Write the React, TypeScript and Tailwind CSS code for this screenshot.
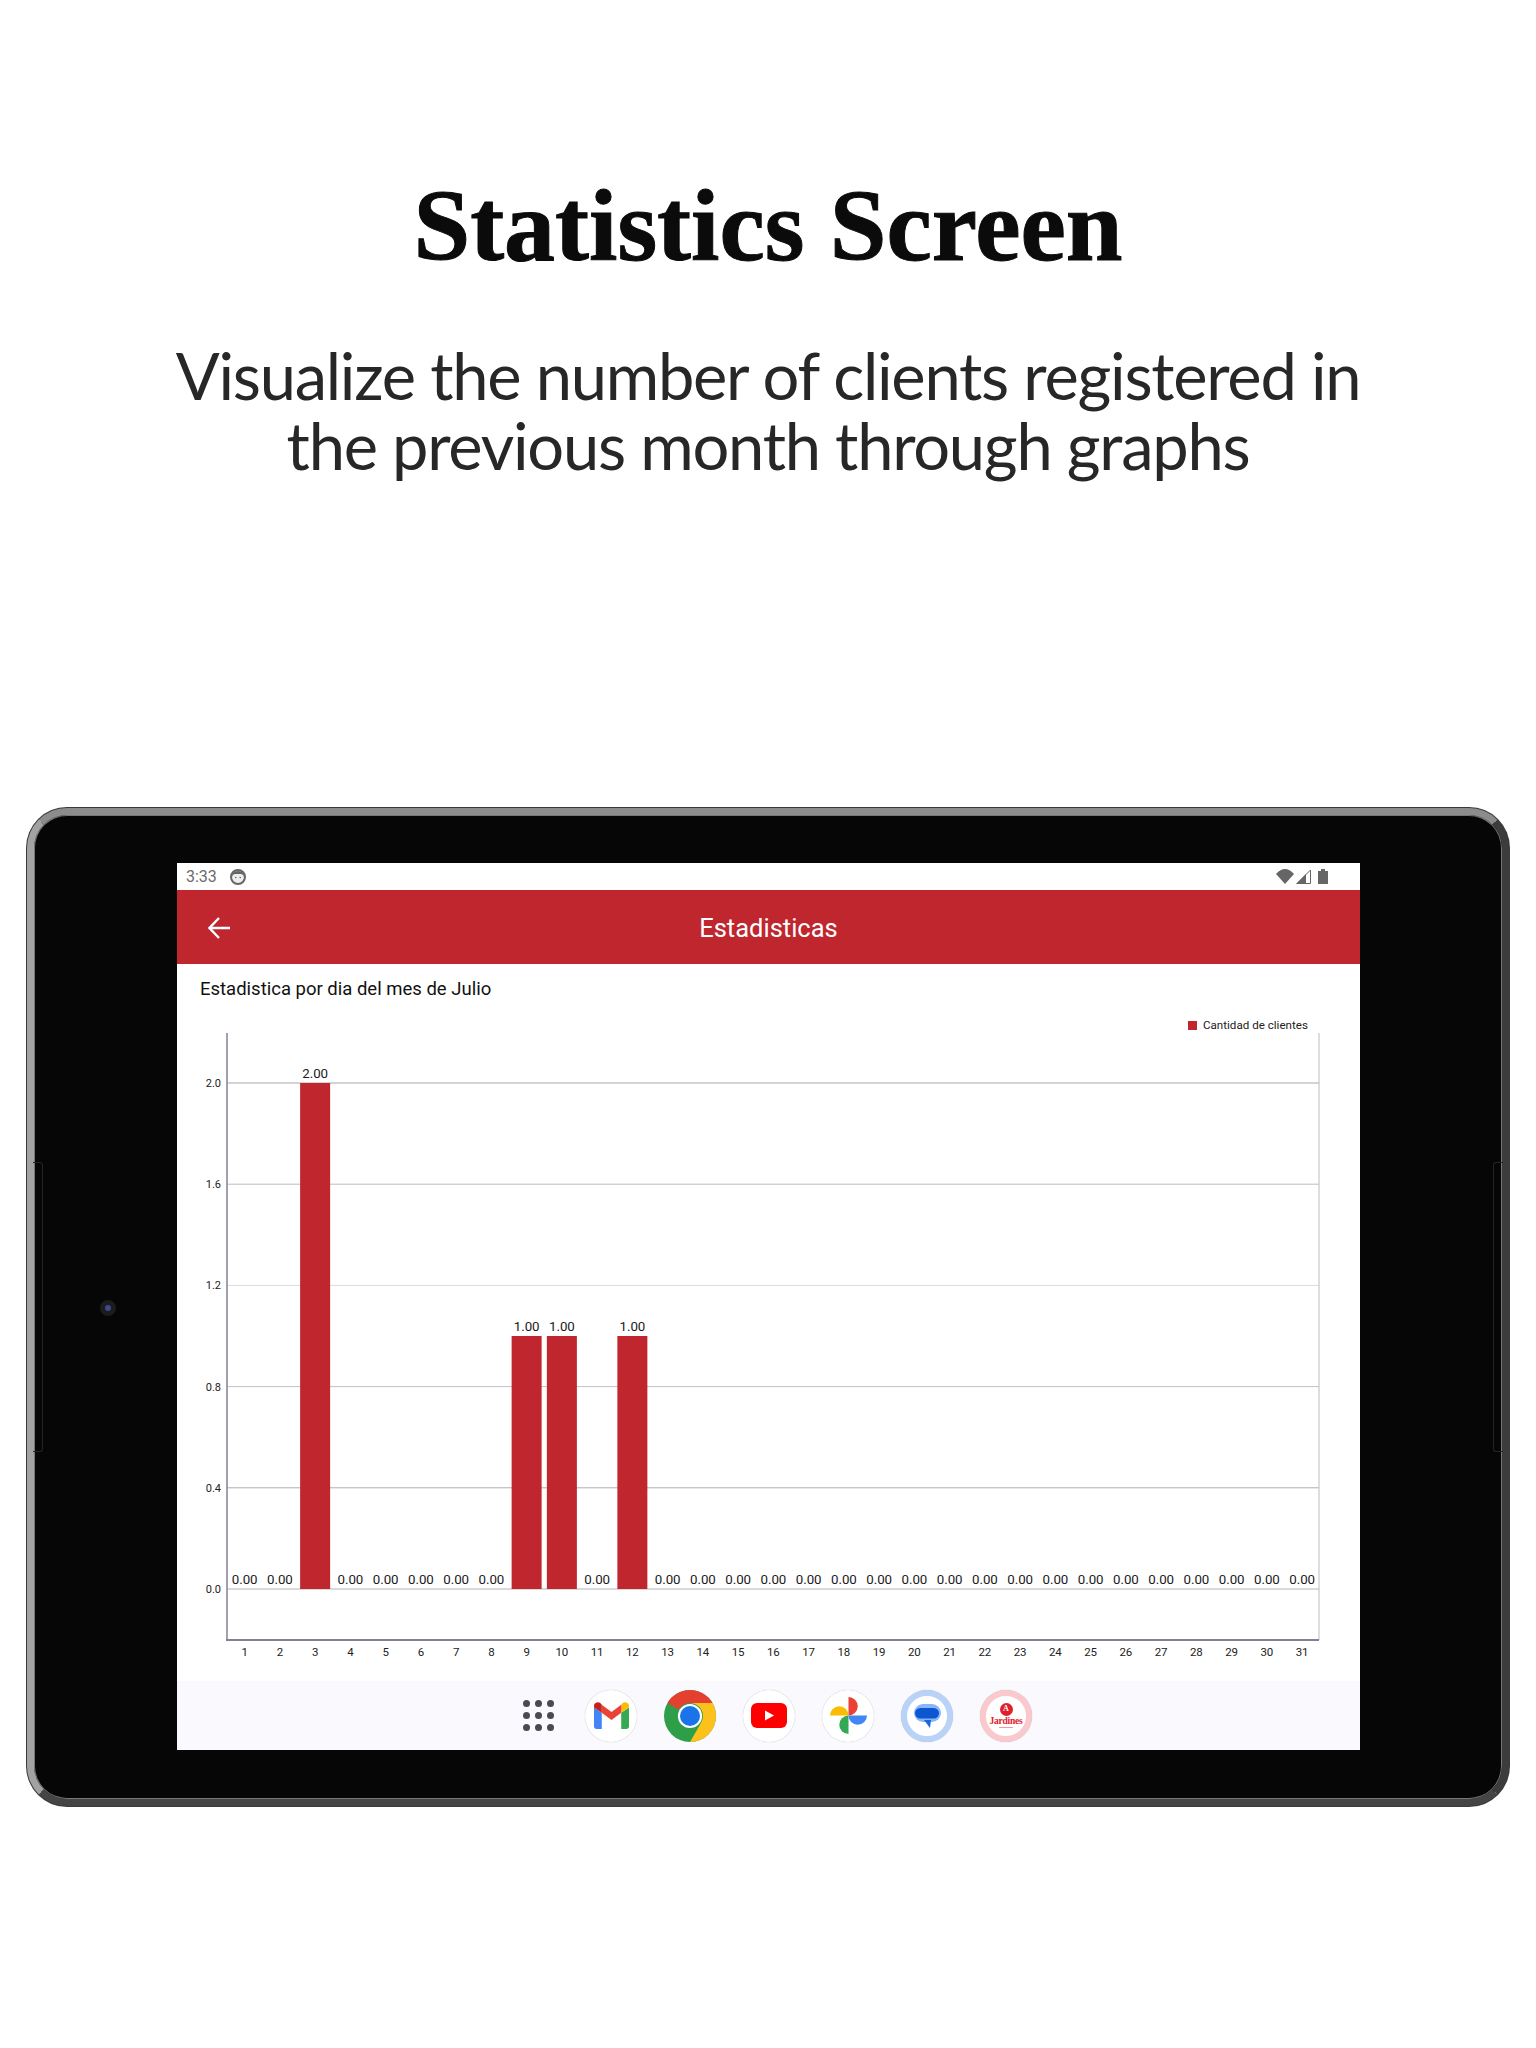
import type { ReactNode } from "react";

const RED = "#bf262e";

const values: Record<number, string> = { 3: "2.00", 9: "1.00", 10: "1.00", 12: "1.00" };
const days = Array.from({ length: 31 }, (_, i) => i + 1);
const ticks = [
  { label: "2.0", color: "#a8a7ae" },
  { label: "1.6", color: "#bdbcc2" },
  { label: "1.2", color: "#dcdbe0" },
  { label: "0.8", color: "#c2c1c6" },
  { label: "0.4", color: "#aeadb3" },
  { label: "0.0", color: "#b4b3b9" },
];

// chart box in its own coordinates: x 50 = y axis, y 0 = top of the axis
const AXIS_X = 50;
const COL = 35.25;
const Y_ZERO = 556;
const UNIT = 253;

function Chart() {
  return (
    <svg width="1183" height="648" viewBox="0 0 1183 648" className="block font-['Roboto',sans-serif]">
      {ticks.map((t, i) => {
        const y = Y_ZERO - (5 - i) * 101.2;
        return (
          <g key={t.label}>
            <line x1={AXIS_X} x2={1142} y1={y} y2={y} stroke={t.color} strokeWidth="1" />
            <text x="44" y={y + 4} textAnchor="end" fontSize="11" fill="#222">{t.label}</text>
          </g>
        );
      })}
      <line x1={1142} x2={1142} y1="0" y2="607" stroke="#bcbcc0" strokeWidth="1" />
      <line x1={AXIS_X} x2={AXIS_X} y1="0" y2="607" stroke="#827f96" strokeWidth="1.5" />
      <line x1={AXIS_X - 1} x2={1142} y1="607" y2="607" stroke="#827f96" strokeWidth="2" />
      {days.map((d) => {
        const cx = AXIS_X + (d - 0.5) * COL;
        const label = values[d] ?? "0.00";
        const h = parseFloat(label) * UNIT;
        return (
          <g key={d}>
            {h > 0 && <rect x={cx - 15} y={Y_ZERO - h} width="30" height={h} fill={RED} />}
            <text x={cx} y={Y_ZERO - h - 5} textAnchor="middle" fontSize="13.300" fill="#1a1a1a">{label}</text>
            <text x={cx} y="623" textAnchor="middle" fontSize="11.500" fill="#222">{d}</text>
          </g>
        );
      })}
    </svg>
  );
}

function DockIcon({ ring, children }: { ring?: string; children: ReactNode }) {
  return (
    <div className={`flex h-[52px] w-[52px] items-center justify-center rounded-full bg-white shadow-[0_0_1px_rgba(0,0,0,0.3)] ${ring ?? ""}`}>
      {children}
    </div>
  );
}

function Gmail() {
  return (
    <svg width="35" height="27" viewBox="0 0 36 30" preserveAspectRatio="none">
      <path d="M0 6v21a3 3 0 0 0 3 3h5V12z" fill="#4285f4" />
      <path d="M28 12v18h5a3 3 0 0 0 3-3V6z" fill="#34a853" />
      <path d="M28 3v9l8-6V4c0-3-4-5-6.500-3z" fill="#fbbc04" />
      <path d="M8 12V3l10 8 10-8v9l-10 8z" fill="#ea4335" />
      <path d="M0 4v2l8 6V3L6.500 1C4 -1 0 1 0 4z" fill="#c5221f" />
    </svg>
  );
}

function Chrome() {
  return (
    <svg width="52" height="52" viewBox="4 4 40 40">
      <circle cx="24" cy="24" r="20" fill="#2f9e49" />
      <path d="M6.680 14A20 20 0 0 1 41.320 14H24A10 10 0 0 0 15.340 19z" fill="#e53f30" />
      <path d="M41.320 14A20 20 0 0 1 24 44L32.660 29A10 10 0 0 0 24 14z" fill="#fcc21b" />
      <circle cx="24" cy="24" r="9.300" fill="#fff" />
      <circle cx="24" cy="24" r="7.700" fill="#1a73e8" />
    </svg>
  );
}

function YouTube() {
  return (
    <svg width="36" height="25" viewBox="0 0 36 25">
      <rect width="36" height="25" rx="6" fill="#f00" />
      <path d="M14 7.500v10l9-5z" fill="#fff" />
    </svg>
  );
}

function Photos() {
  return (
    <svg width="37" height="37" viewBox="0 0 36 36">
      <path d="M0 18a9 9 0 0 1 18 0z" fill="#fbbc04" />
      <path d="M18 0a9 9 0 0 1 0 18z" fill="#ea4335" />
      <path d="M18 18h18a9 9 0 0 1-18 0z" fill="#4285f4" />
      <path d="M18 18v18a9 9 0 0 1 0-18z" fill="#34a853" />
    </svg>
  );
}

function Messages() {
  return (
    <svg width="27" height="24" viewBox="0 0 27 24">
      <rect width="27" height="18" rx="9" fill="#8ab4f8" />
      <path d="M10 16l6 8 1-8z" fill="#1a66e0" />
      <rect x="1" y="4" width="24" height="10.500" rx="5.200" fill="#0b57d0" />
    </svg>
  );
}

function Jardines() {
  return (
    <div className="flex flex-col items-center leading-none text-[#e0202c] font-['Liberation_Serif',serif]">
      <div className="flex h-[13px] w-[13px] items-center justify-center rounded-full bg-[#e0202c] text-[8px] font-bold text-white">A</div>
      <span className="mt-[1px] text-[9.500px] font-bold tracking-tight">Jardines</span>
      <span className="mt-[1px] h-px w-[14px] bg-[#ee9aa0]" />
    </div>
  );
}

export default function App() {
  return (
    <div className="h-[2048px] w-[1536px] bg-white">
      <header className="flex flex-col items-center pt-[171px] text-center">
        <h1 className="text-[102px] font-bold leading-[110px] text-[#0b0b0b] font-['Liberation_Serif',serif] [-webkit-text-stroke:1px_#0b0b0b]">
          Statistics Screen
        </h1>
        <p className="mt-[59px] text-[65px] leading-[70px] tracking-[-1.25px] text-[#272727] font-['Lato',sans-serif]">
          Visualize the number of clients registered in
          <br />
          the previous month through graphs
        </p>
      </header>

      {/* tablet */}
      <div className="relative ml-[27px] mt-[328px] h-[998px] w-[1482px] rounded-[40px] border-[7px] border-t-[#8c8c8c] border-r-[#3c3c3c] border-b-[#454545] border-l-[#a2a2a2] bg-[#060606] shadow-[0_0_0_1px_#3a3a3a,inset_0_0_0_1px_#777]">
        <div className="absolute left-[-1px] top-[347px] h-[290px] w-[10px] rounded-r-[3px] border border-l-0 border-[#242424]" />
        <div className="absolute right-[-1px] top-[347px] h-[290px] w-[10px] rounded-l-[3px] border border-r-0 border-[#242424]" />
        <div className="absolute left-[66px] top-[485px] flex h-[16px] w-[16px] items-center justify-center rounded-full bg-[#1c1c1c]">
          <div className="h-[6px] w-[6px] rounded-full bg-[#3b4a90]" />
        </div>

        <div className="ml-[143px] mt-[48px] flex h-[887px] w-[1183px] flex-col bg-white font-['Roboto',sans-serif]">
          <div className="flex h-[27px] items-center justify-between px-[9px] text-[16px] text-[#6b6b6b]">
            <div className="flex items-center gap-[13px]">
              <span>3:33</span>
              <svg width="16" height="16" viewBox="0 0 16 16">
                <circle cx="8" cy="8" r="7" fill="#eee" stroke="#666" strokeWidth="2" />
                <path d="M2 8q0-6 6-6t6 6q-1-3-3-3H5q-2 0-3 3z" fill="#666" />
                <circle cx="5.800" cy="8.500" r="0.800" fill="#666" />
                <circle cx="10.200" cy="8.500" r="0.800" fill="#666" />
              </svg>
            </div>
            <div className="mr-[23px] flex items-center">
              <svg width="18" height="15" viewBox="0 0 18 15"><path d="M0 5q9-10 18 0l-9 10z" fill="#666" /></svg>
              <svg className="ml-[2px]" width="15" height="15" viewBox="0 0 15 15">
                <path d="M14.500 1v13.500H1z" fill="none" stroke="#666" strokeWidth="1" />
                <path d="M10 5v10H0z" fill="#666" />
              </svg>
              <svg className="ml-[7px]" width="10" height="15" viewBox="0 0 10 15"><path d="M3 0h4v2h3v13H0V2h3z" fill="#666" /></svg>
            </div>
          </div>

          <div className="relative flex h-[74px] items-center justify-center bg-[#bf262e] pt-[2px] text-[25.500px] text-white">
            <svg className="absolute left-[31px]" width="22" height="22" viewBox="0 0 22 22" fill="none" stroke="#fff" strokeWidth="2.400">
              <path d="M22 11H2M11 1L1.500 11 11 21" />
            </svg>
            Estadisticas
          </div>

          <div className="relative flex-1">
            <p className="pl-[23px] pt-[13px] text-[18.500px] leading-[25px] text-[#111]">Estadistica por dia del mes de Julio</p>
            <div className="absolute left-[1011px] top-[56px] flex items-center gap-[6px] text-[11.600px] leading-none text-[#222]">
              <span className="h-[9px] w-[9px] bg-[#bf262e]" />
              Cantidad de clientes
            </div>
            <div className="mt-[31px]">
              <Chart />
            </div>
          </div>

          <div className="flex h-[69px] items-center gap-[27px] bg-[#f9f9fe] pl-[346px]">
            <div className="mr-[4px] grid grid-cols-3 gap-[5px]">
              {Array.from({ length: 9 }, (_, i) => (
                <span key={i} className="h-[7px] w-[7px] rounded-full bg-[#4a4a52]" />
              ))}
            </div>
            <DockIcon><Gmail /></DockIcon>
            <Chrome />
            <DockIcon><YouTube /></DockIcon>
            <DockIcon><Photos /></DockIcon>
            <DockIcon ring="border-[6px] border-[#b9d3f8]"><Messages /></DockIcon>
            <DockIcon ring="border-[6px] border-[#fbc9cd]"><Jardines /></DockIcon>
          </div>
        </div>
      </div>
    </div>
  );
}
